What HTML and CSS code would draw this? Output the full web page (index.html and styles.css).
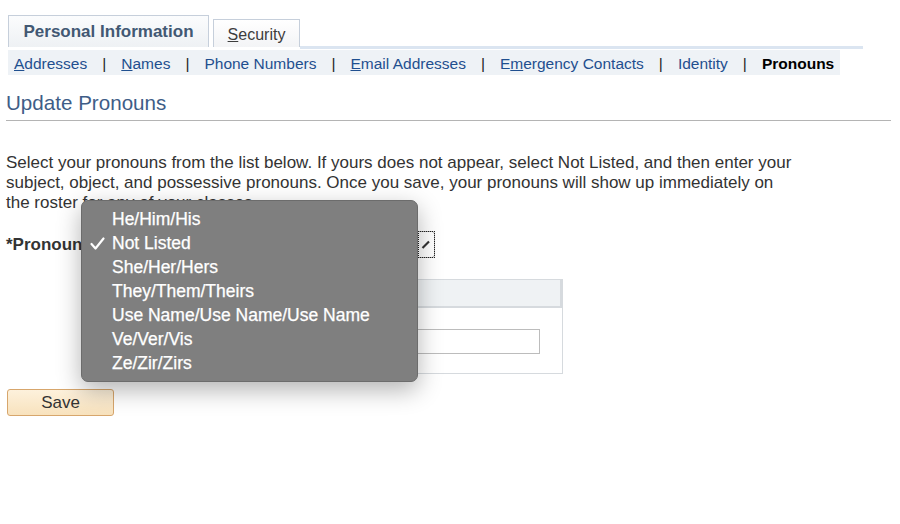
FILE: index.html
```html
<!DOCTYPE html>
<html>
<head>
<meta charset="utf-8">
<link rel="stylesheet" href="styles.css">
</head>
<body>
<div class="page">
  <div class="tabs">
    <div class="tab tab-active">Personal Information</div>
    <div class="tab tab-inactive"><u>S</u>ecurity</div>
    <div class="tab-fill"></div>
  </div>
  <div class="subnav">
    <a class="link"><u>A</u>ddresses</a><span class="sep">|</span>
    <a class="link"><u>N</u>ames</a><span class="sep">|</span>
    <a class="link">Phone Numbers</a><span class="sep">|</span>
    <a class="link"><u>E</u>mail Addresses</a><span class="sep">|</span>
    <a class="link">E<u>m</u>ergency Contacts</a><span class="sep">|</span>
    <a class="link">Identity</a><span class="sep">|</span>
    <span class="current">Pronouns</span>
  </div>
  <h1 class="title">Update Pronouns</h1>
  <p class="intro">Select your pronouns from the list below. If yours does not appear, select Not Listed, and then enter your subject, object, and possessive pronouns. Once you save, your pronouns will show up immediately on the roster for any of your classes.</p>
  <div class="field-row">
    <span class="label">*Pronouns</span>
    <div class="select">
      <span class="select-arrow">
        <svg width="10" height="10" viewBox="0 0 10 10"><path d="M1.5 8 L8 1.5" stroke="#333" stroke-width="2.2" fill="none"/></svg>
      </span>
    </div>
  </div>
  <div class="groupbox">
    <div class="group-head"></div>
    <div class="group-body">
      <div class="input"></div>
    </div>
  </div>
  <button class="save">Save</button>
</div>

<div class="menu">
  <div class="item">He/Him/His</div>
  <div class="item checked"><svg class="check" width="15" height="13" viewBox="0 0 15 13"><path d="M1.5 7 L5.5 11.5 L13.5 1.5" stroke="#fff" stroke-width="2.2" fill="none" stroke-linecap="round" stroke-linejoin="round"/></svg>Not Listed</div>
  <div class="item">She/Her/Hers</div>
  <div class="item">They/Them/Theirs</div>
  <div class="item">Use Name/Use Name/Use Name</div>
  <div class="item">Ve/Ver/Vis</div>
  <div class="item">Ze/Zir/Zirs</div>
</div>
</body>
</html>
```

FILE: styles.css
```css
* { box-sizing: border-box; }
html, body { margin: 0; padding: 0; background: #fff; }
body {
  font-family: "Liberation Sans", Arial, sans-serif;
  color: #333;
  width: 900px;
  height: 524px;
  overflow: hidden;
  position: relative;
}
.page { padding: 15px 0 0 6px; }

.tabs {
  display: flex;
  align-items: flex-end;
  margin-left: 2px;
  width: 855px;
  height: 32px;
}
.tab {
  border: 1px solid #c6cfdb;
  border-bottom: none;
  display: flex;
  align-items: center;
  justify-content: center;
}
.tab-active {
  width: 201px;
  height: 32px;
  background: linear-gradient(#fbfcfd, #eef1f4);
  font-weight: bold;
  font-size: 17px;
  color: #425873;
  padding-top: 1px;
}
.tab-inactive {
  width: 87px;
  height: 28px;
  margin-left: 4px;
  background: linear-gradient(#ffffff, #f3f4f6);
  font-size: 16px;
  color: #3d3d3d;
  padding-top: 2px;
}
.tab-fill {
  flex: 1;
  height: 3px;
  background: #dbe5f1;
  margin-bottom: -2px;
}

.subnav {
  margin-left: 2px;
  margin-top: 3px;
  width: 832px;
  height: 25px;
  background: #eef2f6;
  display: flex;
  align-items: center;
  padding-left: 6px;
  padding-top: 2px;
  font-size: 15.5px;
}
.link { color: #1f4f8f; }
.sep { color: #222; margin: 0 15px; }
.current { color: #000; font-weight: bold; }

.title {
  margin: 17px 0 0 0;
  width: 885px;
  font-size: 20.6px;
  font-weight: normal;
  color: #3e5d87;
  line-height: 22px;
  padding-bottom: 6px;
  border-bottom: 1px solid #b4b4b4;
}

.intro {
  margin: 32px 0 0 0;
  width: 790px;
  font-size: 17px;
  line-height: 20px;
  color: #333;
}

.field-row {
  margin-top: 18px;
  display: flex;
  align-items: center;
  height: 27px;
}
.label { font-weight: bold; font-size: 17px; color: #333; }
.select {
  margin-left: 6px;
  width: 337px;
  height: 27px;
  border: 1px solid #aaa;
  border-radius: 3px;
  display: flex;
  justify-content: flex-end;
}
.select-arrow {
  width: 17px;
  height: 27px;
  margin-top: -1px;
  margin-right: -1px;
  border: 1px dotted #222;
  display: flex;
  align-items: center;
  justify-content: center;
}

.groupbox {
  margin: 21px 0 0 90px;
  width: 467px;
  height: 95px;
  border: 1px solid #d6dade;
}
.group-head {
  height: 28px;
  background: #eff2f4;
  border-bottom: 2px solid #d6dade;
  border-right: 2px solid #d6dade;
}
.group-body { padding: 21px 0 0 0; }
.input {
  margin-left: 20px;
  width: 423px;
  height: 25px;
  border: 1px solid #bcbcbc;
}

.save {
  display: block;
  margin: 15px 0 0 1px;
  width: 107px;
  height: 27px;
  border: 1px solid #d7a66c;
  border-radius: 3px;
  background: linear-gradient(#fdf1dc, #f8e2bd);
  font-family: "Liberation Sans", Arial, sans-serif;
  font-size: 17px;
  color: #333;
  padding: 0;
}

.menu {
  position: absolute;
  left: 81px;
  top: 200px;
  width: 337px;
  height: 182px;
  background: #7f7f7f;
  border: 1px solid #6c6c6c;
  border-radius: 7px;
  box-shadow: 0 8px 24px rgba(0,0,0,0.3);
  padding-top: 6px;
}
.item {
  position: relative;
  height: 24px;
  line-height: 24px;
  padding-left: 30px;
  color: #fff;
  font-size: 17.5px;
  font-family: "Liberation Sans", Arial, sans-serif;
  -webkit-text-stroke: 0.25px #fff;
}
.check {
  position: absolute;
  left: 8px;
  top: 6px;
}
```
